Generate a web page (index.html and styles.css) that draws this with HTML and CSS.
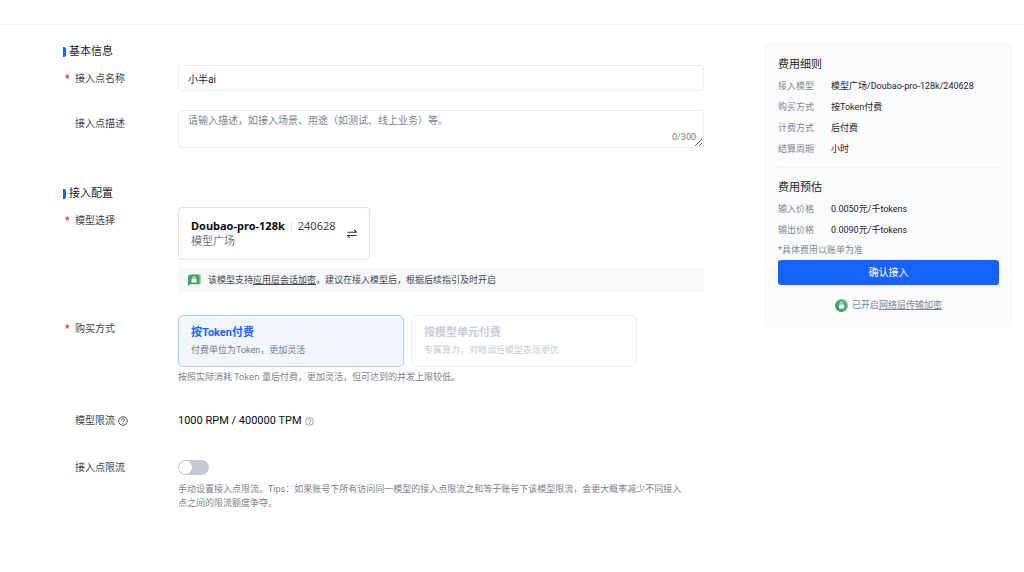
FILE: index.html
```html
<!DOCTYPE html>
<html lang="zh-CN">
<head>
<meta charset="utf-8">
<meta name="viewport" content="width=device-width, initial-scale=1">
<title>创建接入点</title>
<link rel="stylesheet" href="styles.css">
</head>
<body>
<header class="topbar"></header>
<main class="page">
  <form class="form" id="endpoint-form">
    <section class="section section-basic">
      <h2 class="section-title">基本信息</h2>
      <div class="row">
        <label class="label required" for="name">接入点名称</label>
        <input class="text-input" id="name" type="text" value="小半ai" required>
      </div>
      <div class="row row-desc">
        <label class="label" for="desc">接入点描述</label>
        <div class="textarea-wrap">
          <textarea class="textarea" id="desc" maxlength="300" placeholder="请输入描述，如接入场景、用途（如测试、线上业务）等。"></textarea>
          <span class="counter">0/300</span>
        </div>
      </div>
    </section>

    <section class="section">
      <h2 class="section-title">接入配置</h2>
      <div class="row">
        <span class="label required">模型选择</span>
        <div class="stack">
          <div class="model-card">
            <div class="model-info">
              <div class="model-name"><strong>Doubao-pro-128k</strong><span class="bar"></span><span class="version">240628</span></div>
              <div class="model-source">模型广场</div>
            </div>
            <button class="icon-button" type="button" aria-label="切换模型">
              <svg width="10" height="10" viewBox="0 0 10 10" fill="none" stroke="#2b2f36" stroke-width="1.1"><path d="M.5 3.200h9L7.200 1M9.500 6.500h-9L2.800 9"/></svg>
            </button>
          </div>
          <div class="notice">
            <svg width="13" height="12" viewBox="0 0 13 12"><path d="M3 0h8.500Q13 0 13 1.500V9q0 1.500-1.500 1.500H3z" fill="#8ed8a4"/><path d="M1.500 1H10q1.500 0 1.500 1.500v6Q11.500 10 10 10H2.500L0 12V2.500Q0 1 1.500 1z" fill="#3aa863"/><rect x="3.500" y="5" width="5" height="3.500" rx=".6" fill="#fff"/><path d="M4.700 5V4a1.300 1.300 0 0 1 2.600 0v1" fill="none" stroke="#fff" stroke-width=".9"/></svg>
            <span>该模型支持<a href="#session-encryption">应用层会话加密</a>，建议在接入模型后，根据后续指引及时开启</span>
          </div>
        </div>
      </div>
      <div class="row row-pay">
        <span class="label required">购买方式</span>
        <div class="stack">
          <div class="pay-options">
            <label class="pay-card selected">
              <input class="pay-radio" type="radio" name="pay" checked>
              <span class="pay-title">按Token付费</span>
              <span class="pay-desc">付费单位为Token，更加灵活</span>
            </label>
            <label class="pay-card disabled">
              <input class="pay-radio" type="radio" name="pay" disabled>
              <span class="pay-title">按模型单元付费</span>
              <span class="pay-desc">专属算力，对精调后模型表现更优</span>
            </label>
          </div>
          <p class="hint hint-pay">按照实际消耗 Token 量后付费，更加灵活，但可达到的并发上限较低。</p>
        </div>
      </div>
      <div class="row row-limit">
        <span class="label">模型限流
          <svg class="help" width="10" height="10" viewBox="0 0 10 10" fill="none" stroke="#42464e"><circle cx="5" cy="5" r="4.300" stroke-width=".9"/><path d="M3.600 4.100a1.400 1.400 0 1 1 2 1.200Q5 5.600 5 6.300M5 7v.8" stroke-width=".9"/></svg>
        </span>
        <div class="limit-value">1000 RPM / 400000 TPM
          <svg class="help" width="9" height="9" viewBox="0 0 10 10" fill="none" stroke="#777c85"><circle cx="5" cy="5" r="4.300" stroke-width=".8"/><path d="M3.600 4.100a1.400 1.400 0 1 1 2 1.200Q5 5.600 5 6.300M5 7v.8" stroke-width=".8"/></svg>
        </div>
      </div>
      <div class="row row-switch">
        <label class="label" for="limit">接入点限流</label>
        <div class="stack">
          <input class="switch" id="limit" type="checkbox" role="switch">
          <p class="hint hint-limit">手动设置接入点限流。Tips：如果账号下所有访问同一模型的接入点限流之和等于账号下该模型限流，会更大概率减少不同接入点之间的限流额度争夺。</p>
        </div>
      </div>
    </section>
  </form>

  <aside class="summary">
    <h2 class="summary-title">费用细则</h2>
    <dl class="facts">
      <dt>接入模型</dt><dd>模型广场/Doubao-pro-128k/240628</dd>
      <dt>购买方式</dt><dd>按Token付费</dd>
      <dt>计费方式</dt><dd>后付费</dd>
      <dt>结算周期</dt><dd>小时</dd>
    </dl>
    <hr class="divider">
    <h2 class="summary-title">费用预估</h2>
    <dl class="facts">
      <dt>输入价格</dt><dd>0.0050元/千tokens</dd>
      <dt>输出价格</dt><dd>0.0090元/千tokens</dd>
    </dl>
    <p class="note">*具体费用以账单为准</p>
    <button class="submit" type="submit" form="endpoint-form">确认接入</button>
    <div class="secure">
      <svg width="13" height="13" viewBox="0 0 13 13"><defs><linearGradient id="lock-fill" x1="0" y1="1" x2="1" y2="0"><stop offset="0" stop-color="#238a4e"/><stop offset="1" stop-color="#84cf9d"/></linearGradient></defs><circle cx="6.500" cy="6.500" r="6.500" fill="url(#lock-fill)"/><circle cx="6.500" cy="6.500" r="4.800" fill="#45aa6d"/><rect x="4" y="5.700" width="5" height="3.700" rx=".7" fill="#fff"/><path d="M5.200 5.700V4.500a1.300 1.300 0 0 1 2.600 0v1.200" fill="none" stroke="#fff"/></svg>
      <span>已开启<a href="#transport-encryption">网络层传输加密</a></span>
    </div>
  </aside>
</main>
</body>
</html>
```
FILE: styles.css
```css
* { box-sizing: border-box; }

body {
  margin: 0;
  background: #fff;
  color: #1d2129;
  font: 10px/16px Roboto, "Noto Sans CJK SC", sans-serif;
}

h2, p, dl, dd { margin: 0; }
button, input, textarea { font: inherit; color: inherit; }
a { color: inherit; text-decoration: underline; text-underline-offset: 1px; }
svg { flex: none; }

.topbar { height: 25px; border-bottom: 1px solid #f2f3f5; }

.page {
  display: flex;
  align-items: flex-start;
  gap: 61px;
  padding: 18px 12px 48px 63px;
}

.form { flex: 1; min-width: 0; }
.section + .section { margin-top: 37px; }

.section-title {
  display: flex;
  align-items: center;
  gap: 3px;
  margin-bottom: 4px;
  font-size: 11px;
  line-height: 18px;
  font-weight: 400;
}
.section-title::before {
  content: "";
  width: 3px;
  height: 10px;
  border-radius: 0 2px 2px 0;
  background: #1664ff;
}

.row {
  display: grid;
  grid-template-columns: 115px minmax(0, 1fr);
  align-items: start;
}
.row-desc { margin-top: 19px; }
.row-pay { margin-top: 23px; }
.row-limit { margin-top: 29px; }
.row-switch { margin-top: 31px; }

.label {
  display: flex;
  align-items: center;
  gap: 3px;
  padding: 6px 0 0 12px;
  color: #42464e;
}
.required { padding-left: 2px; }
.required::before { content: "*"; width: 7px; color: #d9362b; font-weight: 700; }
.row-limit .label, .row-switch .label { padding-top: 0; }

.text-input {
  width: 100%;
  height: 26px;
  padding: 0 9px;
  border: 1px solid #eaedf1;
  border-radius: 3px;
  background: #fff;
}

.textarea-wrap { position: relative; display: flex; }
.textarea {
  width: 100%;
  height: 38px;
  padding: 2px 9px;
  border: 1px solid #eaedf1;
  border-radius: 3px;
  background: #fff;
  overflow: hidden;
  resize: vertical;
}
.textarea::placeholder { color: #80838a; }
.counter { position: absolute; right: 8px; bottom: 3px; font-size: 9px; color: #737a87; }

.stack { display: flex; flex-direction: column; align-items: flex-start; }

.model-card {
  display: flex;
  align-items: center;
  gap: 11px;
  padding: 10px 12px;
  border: 1px solid #dde2e9;
  border-radius: 4px;
}
.model-name {
  display: flex;
  align-items: center;
  gap: 6px;
  color: #0c0d0e;
  font-family: "Noto Sans", "Noto Sans CJK SC", sans-serif;
  font-size: 11px;
}
.bar { width: 1px; height: 10px; background: #dde2e9; }
.version { color: #42464e; }
.model-source { font-size: 11px; line-height: 15px; color: #737a87; }
.icon-button { display: flex; padding: 0; border: 0; background: none; }

.notice {
  display: flex;
  align-items: center;
  gap: 7px;
  width: 100%;
  margin-top: 8px;
  padding: 4px 10px;
  background: #f6f8fa;
  color: #42464e;
  font-size: 9px;
}

.pay-options { display: flex; gap: 7px; width: 100%; }
.pay-card {
  display: flex;
  flex-direction: column;
  flex: 0 1 226px;
  gap: 1px;
  padding: 9px 12px 8px;
  border: 1px solid #edeff2;
  border-radius: 5px;
}
.pay-card.selected { border-color: #a9c9f8; background: #f2f7fe; }
.pay-radio { position: absolute; opacity: 0; margin: 0; }
.pay-title { font-size: 11px; font-weight: 700; }
.pay-desc { font-size: 9px; color: #737a87; }
.selected .pay-title { color: #1664ff; }
.disabled .pay-title, .disabled .pay-desc { color: #c9cdd4; }

.hint { color: #7d828b; font-size: 9px; line-height: 14px; }
.hint-pay { margin-top: 3px; font-family: "Noto Sans", "Noto Sans CJK SC", sans-serif; }
.hint-limit { max-width: 509px; margin-top: 7px; }

.limit-value { display: flex; align-items: center; gap: 3px; font-size: 11px; color: #0c0d0e; }

.switch {
  appearance: none;
  display: flex;
  align-items: center;
  width: 31px;
  height: 15px;
  margin: 0;
  padding: 1px;
  border-radius: 8px;
  background: #c5cad5;
}
.switch::before {
  content: "";
  width: 13px;
  height: 13px;
  border-radius: 50%;
  background: #fff;
}
.switch:checked { justify-content: flex-end; background: #1664ff; }

.summary {
  flex: 0 0 247px;
  padding: 13px 12px;
  border: 1px solid #f3f6f9;
  border-radius: 5px;
  background: #fafcfe;
}
.summary-title { font-size: 11px; font-weight: 400; line-height: 16px; }
.facts {
  display: grid;
  grid-template-columns: 53px 1fr;
  row-gap: 5px;
  margin-top: 5px;
  font-size: 9px;
}
.facts dt { color: #80858f; }
.divider { height: 1px; margin: 10px 0 12px; border: 0; background: #f1f3f6; }
.note { margin-top: 4px; font-size: 9px; color: #80858f; }
.submit {
  display: block;
  width: 100%;
  height: 25px;
  margin-top: 2px;
  border: 0;
  border-radius: 3px;
  background: #1664ff;
  color: #fff;
}
.secure {
  display: flex;
  align-items: center;
  justify-content: center;
  gap: 4px;
  margin-top: 12px;
  font-size: 9px;
  color: #80858f;
}
```
